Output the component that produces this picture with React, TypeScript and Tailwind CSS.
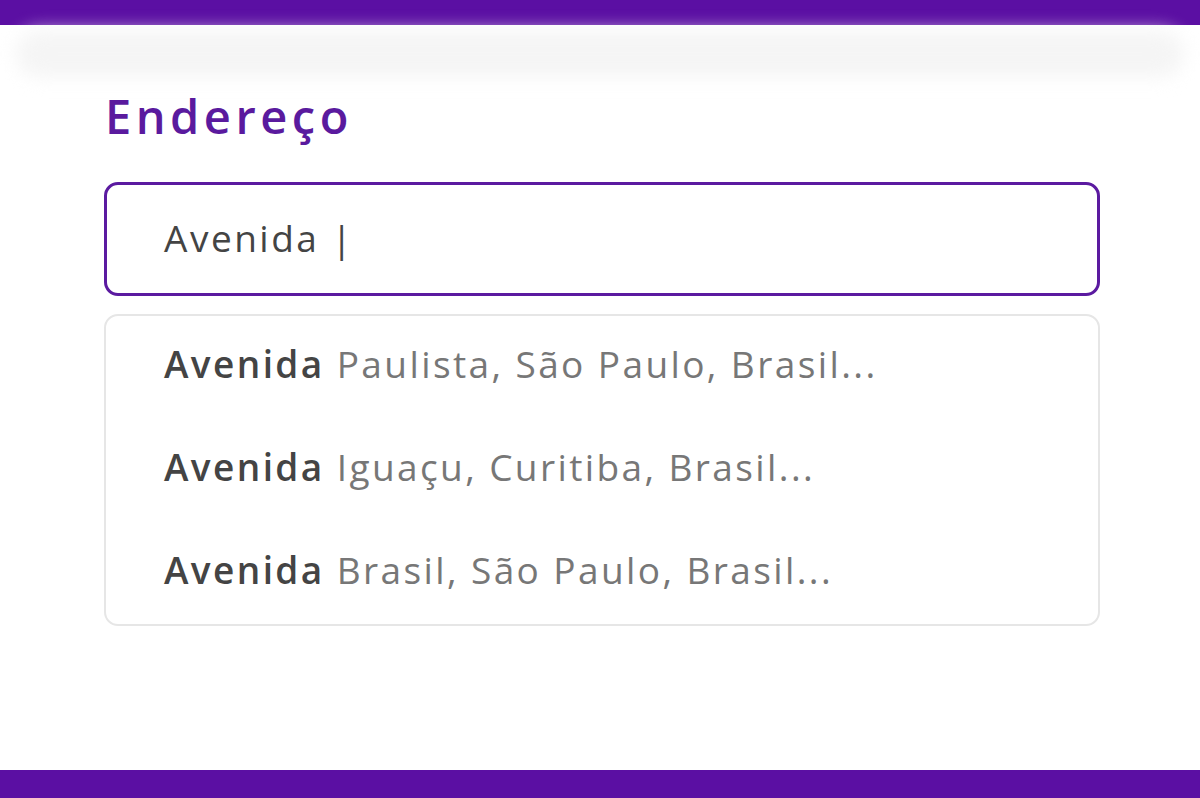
export default function App() {
  const items = [
    "Paulista, São Paulo, Brasil...",
    "Iguaçu, Curitiba, Brasil...",
    "Brasil, São Paulo, Brasil...",
  ];
  return (
    <div
      className="h-[798px] w-[1200px] flex flex-col bg-white overflow-hidden"
      style={{ fontFamily: '"Open Sans", "Noto Sans", sans-serif' }}
    >
      <div className="h-[25px] bg-[#5b0fa3] shrink-0" />
      <div className="h-[60px] shrink-0 px-[16px] pt-[6px]">
        <div className="h-[46px] bg-[#f5f5f5] rounded-[30px] blur-[9px]" />
      </div>
      <div className="flex-1 flex flex-col pl-[104px] pr-[100px] pt-[3px]">
        <h1 className="text-[47px] leading-[56px] font-semibold text-[#5a1a9e] tracking-[4.5px] pl-[1px]">
          Endereço
        </h1>
        <div className="mt-[38px] h-[114px] shrink-0 border-[3px] border-[#5b1aa0] rounded-[14px] flex items-center pl-[57px]">
          <span className="text-[37px] text-[#444] tracking-[2.5px] pb-[2px]">
            Avenida |
          </span>
        </div>
        <div className="mt-[18px] h-[312px] shrink-0 border-2 border-[#e6e6e6] rounded-[14px] flex flex-col gap-[53px] pt-[23px] pl-[58px]">
          {items.map((t) => (
            <div key={t} className="h-[50px] shrink-0 flex items-start">
              <span className="text-[37px] leading-[50px] tracking-[2.4px] text-[#777] whitespace-nowrap">
                <span className="font-semibold text-[#444]">Avenida</span> {t}
              </span>
            </div>
          ))}
        </div>
      </div>
      <div className="h-[28px] bg-[#5b0fa3] shrink-0" />
    </div>
  );
}
